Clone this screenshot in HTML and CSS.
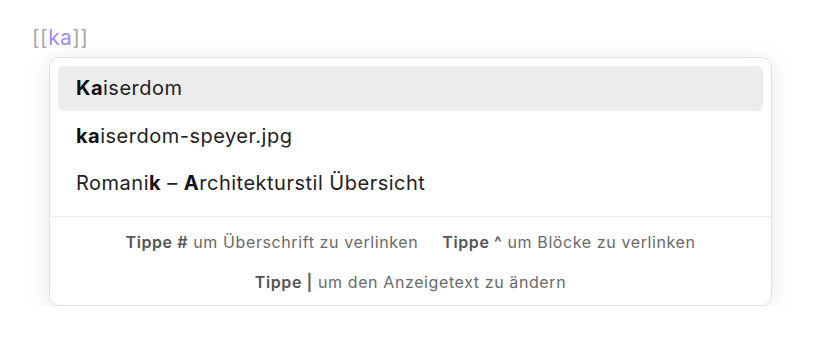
FILE: index.html
```html
<!DOCTYPE html>
<html lang="de">
<head>
    <meta charset="UTF-8">
    <title>Link-Vorschläge</title>
    <link rel="stylesheet" href="styles.css">
</head>
<body>
    <div class="editor-line">
        <span class="bracket">[[</span><span class="query">ka</span><span class="bracket">]]</span>
    </div>
    <div class="suggest-popup">
        <div class="suggest-list">
            <div class="suggest-item selected"><b>Ka</b>iserdom</div>
            <div class="suggest-item"><b>ka</b>iserdom-speyer.jpg</div>
            <div class="suggest-item">Romani<b>k</b> – <b>A</b>rchitekturstil Übersicht</div>
        </div>
        <div class="suggest-footer">
            <div class="hint-row">
                <span class="hint"><b>Tippe #</b> um Überschrift zu verlinken</span>
                <span class="hint"><b>Tippe ^</b> um Blöcke zu verlinken</span>
            </div>
            <div class="hint-row">
                <span class="hint"><b>Tippe |</b> um den Anzeigetext zu ändern</span>
            </div>
        </div>
    </div>
</body>
</html>
```
FILE: styles.css
```css
body {
    font-family: Inter, "Noto Sans", sans-serif;
    background-color: #ffffff;
    margin: 0;
    padding: 0;
}
.editor-line {
    padding: 24px 0 0 32px;
    height: 33px;
    font-size: 21px;
    line-height: 28px;
    letter-spacing: 0.4px;
}
.bracket {
    color: #a9a9a9;
}
.query {
    color: #a68cf2;
}
.suggest-popup {
    margin-left: 49px;
    width: 721px;
    border: 1px solid #e2e2e2;
    border-radius: 10px;
    background-color: #ffffff;
    box-shadow: 0 4px 24px rgba(0, 0, 0, 0.1);
}
.suggest-list {
    padding: 8px 8px 9px 8px;
    border-bottom: 1px solid #ececec;
}
.suggest-item {
    height: 47px;
    line-height: 47px;
    padding-left: 18px;
    font-size: 20px;
    letter-spacing: 0.5px;
    color: #222222;
    border-radius: 6px;
}
.suggest-item b {
    font-weight: 700;
    color: #111111;
}
.suggest-item.selected {
    height: 45px;
    line-height: 45px;
    margin-bottom: 2px;
    background-color: #ececec;
}
.suggest-footer {
    padding: 12px 0 10px 0;
}
.hint-row {
    display: flex;
    justify-content: center;
    gap: 24px;
    height: 40px;
    line-height: 26px;
    font-size: 16px;
    letter-spacing: 0.6px;
    color: #6a6a6a;
}
.hint-row:last-child {
    height: 26px;
}
.hint b {
    font-weight: 600;
    color: #555555;
}
```
